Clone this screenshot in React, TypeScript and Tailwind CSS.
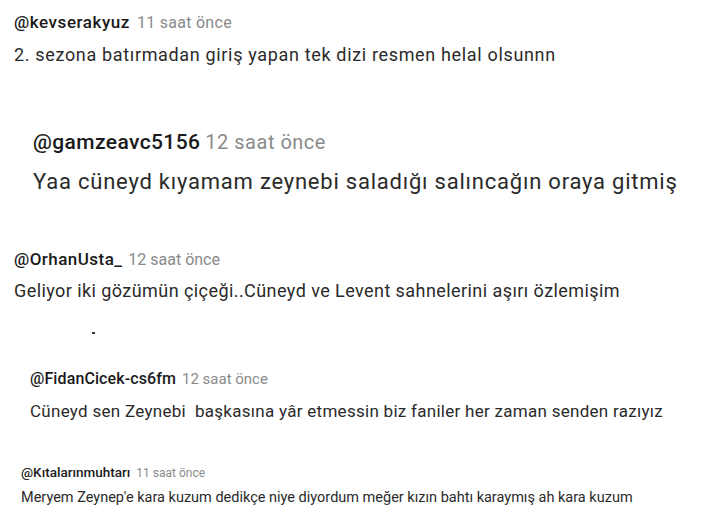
const font = { fontFamily: "Roboto, 'Noto Sans', sans-serif" };

type Comment = {
  user: string;
  time: string;
  body: string;
  wrap: string;
  head: string;
  userCls: string;
  timeCls: string;
  bodyCls: string;
};

const comments: Comment[] = [
  {
    user: "@kevserakyuz",
    time: "11 saat önce",
    body: "2. sezona batırmadan giriş yapan tek dizi resmen helal olsunnn",
    wrap: "pt-[12px] pl-[14px]",
    head: "h-[20px] leading-[20px] gap-[7px]",
    userCls: "text-[17px] tracking-[0.55px] font-medium text-[#1a1a1a]",
    timeCls: "text-[16px] tracking-[0.28px] text-[#8a8a8a]",
    bodyCls: "mt-[11px] h-[24px] leading-[24px] text-[18px] tracking-[0.66px] text-[#2a2a2a]"
  },
  {
    user: "@gamzeavc5156",
    time: "12 saat önce",
    body: "Yaa cüneyd kıyamam zeynebi saladığı salıncağın oraya gitmiş",
    wrap: "pt-[62px] pl-[33px]",
    head: "h-[26px] leading-[26px] gap-[5px]",
    userCls: "text-[21px] tracking-[0.4px] font-medium text-[#1a1a1a]",
    timeCls: "text-[20px] tracking-[0.5px] text-[#8a8a8a]",
    bodyCls: "mt-[12px] h-[30px] leading-[30px] text-[22px] tracking-[0.78px] text-[#2a2a2a]"
  },
  {
    user: "@OrhanUsta_",
    time: "12 saat önce",
    body: "Geliyor iki gözümün çiçeği..Cüneyd ve Levent sahnelerini aşırı özlemişim",
    wrap: "pt-[52px] pl-[14px]",
    head: "h-[20px] leading-[20px] gap-[6px]",
    userCls: "text-[17px] tracking-[0.45px] font-medium text-[#1a1a1a]",
    timeCls: "text-[16px] text-[#8a8a8a]",
    bodyCls: "mt-[10px] h-[24px] leading-[24px] text-[18px] tracking-[0.43px] text-[#2a2a2a]"
  },
  {
    user: "@FidanCicek-cs6fm",
    time: "12 saat önce",
    body: "Cüneyd sen Zeynebi\u00a0 başkasına yâr etmessin biz faniler her zaman senden razıyız",
    wrap: "pt-[35px] pl-[30px]",
    head: "h-[20px] leading-[20px] gap-[6px]",
    userCls: "text-[16px] tracking-[0.1px] font-medium text-[#1a1a1a]",
    timeCls: "text-[15px] text-[#8a8a8a]",
    bodyCls: "mt-[10px] h-[24px] leading-[24px] text-[17px] tracking-[0.28px] text-[#2a2a2a]"
  },
  {
    user: "@Kıtalarınmuhtarı",
    time: "11 saat önce",
    body: "Meryem Zeynep'e kara kuzum dedikçe niye diyordum meğer kızın bahtı karaymış ah kara kuzum",
    wrap: "pt-[41px] pl-[21px]",
    head: "h-[16px] leading-[16px] gap-[6px]",
    userCls: "text-[13.5px] font-medium text-[#1a1a1a]",
    timeCls: "text-[12px] text-[#8a8a8a]",
    bodyCls: "mt-[8px] h-[20px] leading-[20px] text-[14.5px] text-[#2a2a2a]"
  }
];

function CommentBlock({ c, children }: { c: Comment; children?: React.ReactNode }) {
  return (
    <div className={c.wrap}>
      <div className={`flex items-baseline whitespace-nowrap ${c.head}`}>
        <span className={c.userCls}>{c.user}</span>
        <span className={c.timeCls}>{c.time}</span>
      </div>
      <p className={`whitespace-nowrap ${c.bodyCls}`}>{c.body}</p>
      {children}
    </div>
  );
}

export default function App() {
  return (
    <div className="h-[523px] w-[716px] overflow-hidden bg-white" style={font}>
      <CommentBlock c={comments[0]} />
      <CommentBlock c={comments[1]} />
      <CommentBlock c={comments[2]}>
        <div className="ml-[78px] mt-[29px] h-[2px] w-[3px] bg-[#333]" />
      </CommentBlock>
      <CommentBlock c={comments[3]} />
      <CommentBlock c={comments[4]} />
    </div>
  );
}
